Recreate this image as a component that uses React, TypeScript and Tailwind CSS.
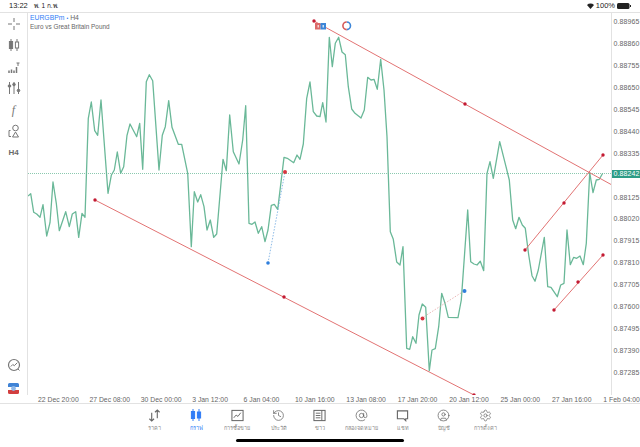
import { AtSign, CircleUser, History, Settings } from "lucide-react";
import type { ReactNode } from "react";

// price series in page coordinates, read off the screenshot
const PRICE =
  "28,196 30.7,193.7 33.7,212.3 36.7,214 40,217.3 43,204.7 46.7,236 50,222.7 53,182 56.3,203.3 59.3,230.7 65.7,211.7 69.3,226.7 72.3,214 75.7,211.7 78.7,237.3 82,213.3 85,217.3 88.3,118.3 91.3,102 94.7,130.7 97.7,135.3 101,100 104,140 108,193.3 111.3,175.3 114.3,170 117.3,152 120.7,173.3 123.7,166.7 127,135.3 130,124 136.7,136.7 139.7,123.3 142.7,169.3 146.3,81.7 149.3,74.7 152.7,80.7 159,170 162.3,135.3 165.3,126.7 168.7,100.7 172,127.3 178.3,144.3 181.7,144.3 187.7,173.3 191.3,246.7 194.3,191.7 197.7,202 200.7,194.7 204,206.7 207,230 210.3,220 213.7,237.3 216.7,234 223,159.3 226.3,170.7 229.7,115 233.3,151.7 239,164 242.7,140 245.7,105.7 249,223.3 252,224.3 255,222 258.3,233.3 261.7,226.7 265,241.7 268,230 271.3,205.3 274.3,204.3 277.7,209.3 284,157.3 287.3,158.3 293.7,162.7 297,155 300,159.3 303.3,144 306.7,98.3 310,82 313.3,111.7 316.7,116 320,116.7 322.7,102.7 326,122 329.3,37.3 332.3,66.7 335.3,43.3 338.7,37.3 342,52 345.3,54.7 348.3,86.7 351.7,109 355,113.3 361,118 364.3,110 367.7,77.3 371,80 374,79.3 377.3,89.3 380.7,59.3 384,90 387,136.7 390.3,231.7 393.3,239.3 396.7,262 400,265 403,246.7 406.7,348.3 409.7,349.3 412.7,336.7 416,343.3 419,315 422.3,304 425.7,307.3 429.3,370.7 432,350 435.3,348.7 438.7,326.7 441.7,293.3 445,303.3 448.3,317.3 458,317.7 461.3,300 467.7,210 470.7,261.7 474,264 477,265 480.3,261.3 483.7,270.7 487,173.3 490,161.7 493.3,178.3 499.7,141.7 506,166.7 509.3,180 512.7,220 515.7,228.7 519,217.3 522.3,225 525.3,228.3 528.7,255 532,275.7 535,281.3 538.3,270 544.3,237.3 547.7,286.7 551,287.3 557.3,296.7 560.7,285 564,283.3 567,230 570.3,264.7 573.7,257.3 576.7,258.3 580,256 583.3,264.7 586.3,243.3 589.7,172.7 593,192.7 596.3,180 599.3,179.3 602.7,173.3";

const DOTS = [
  [314, 21],
  [465, 104],
  [95, 200],
  [284, 297],
  [474, 395],
  [525, 250],
  [564, 203],
  [603, 155],
  [554, 310],
  [578, 282],
  [603, 255],
];

// the empty slot sits under the current price tag
const PRICE_LABELS = [
  "0.88965", "0.88860", "0.88755", "0.88650", "0.88545", "0.88440", "0.88335", "",
  "0.88125", "0.88020", "0.87915", "0.87810", "0.87705", "0.87600", "0.87495", "0.87390", "0.87285",
];

const TIME_LABELS = [
  "22 Dec 20:00", "27 Dec 08:00", "30 Dec 00:00", "3 Jan 12:00", "6 Jan 04:00", "10 Jan 16:00",
  "13 Jan 08:00", "17 Jan 20:00", "20 Jan 12:00", "25 Jan 00:00", "27 Jan 16:00", "1 Feb 04:00",
];

function Glyph({ children, size = 14 }: { children: ReactNode; size?: number }) {
  return (
    <svg width={size} height={size} viewBox="0 0 14 14" fill="none" stroke="currentColor" strokeWidth="1">
      {children}
    </svg>
  );
}

function Candles({ fill = false }: { fill?: boolean }) {
  return (
    <Glyph>
      <path d="M4 1v12M10 1v12" />
      <rect x="2.4" y="3.5" width="3.2" height="7" fill="currentColor" />
      <rect x="8.4" y="4" width="3.2" height="6" fill={fill ? "currentColor" : "#fff"} />
    </Glyph>
  );
}

function SideTools() {
  return (
    <div className="flex w-[27px] shrink-0 flex-col items-center justify-between pt-[3.500px] pb-[1.500px] text-[#777]">
      <div className="flex flex-col items-center gap-[7.500px]">
        <Glyph>
          <path d="M7 1v4M7 9v4M1 7h4M9 7h4" />
        </Glyph>
        <Candles />
        <Glyph>
          <path d="M2 13V10.500M4.500 13V9.500M7 13V10.500M9.500 13V7" strokeWidth="1.500" />
          <path d="M9.500 3h3M11 3V6" />
        </Glyph>
        <Glyph>
          <path d="M2.500 1v12M7 1v12M11.500 1v12" />
          <circle cx="2.500" cy="5" r="1.300" fill="currentColor" />
          <circle cx="7" cy="3.500" r="1.300" fill="currentColor" />
          <circle cx="11.500" cy="9.500" r="1.300" fill="currentColor" />
        </Glyph>
        <span className="flex h-[14px] items-center font-['Liberation_Serif',serif] text-[12px] leading-none italic">f</span>
        <Glyph>
          <circle cx="8.500" cy="4" r="2.800" />
          <path d="M5.500 13l3-5 3 5zM3.500 6.500H2v6h2" />
        </Glyph>
        <span className="flex h-[14px] items-center text-[8px] leading-none font-bold text-[#6a6a6a]">H4</span>
      </div>
      <div className="flex flex-col items-center gap-[11px]">
        <Glyph>
          <circle cx="7" cy="7" r="5.500" strokeWidth="1.200" />
          <path d="M3.800 8.500l2-2 1.500 1.200 3-3M11 11l1.500 1.500" />
        </Glyph>
        <svg width="11" height="11" viewBox="0 0 11 11">
          <path d="M0 1.500A1.500 1.500 0 0 1 1.500 0h8A1.500 1.500 0 0 1 11 1.500V4H0z" fill="#3f83d6" />
          <path d="M0 7h11v2.500A1.500 1.500 0 0 1 9.500 11h-8A1.500 1.500 0 0 1 0 9.500z" fill="#d23f3f" />
          <circle cx="5.500" cy="5.500" r="2.400" fill="#8fb8e8" />
        </svg>
      </div>
    </div>
  );
}

function Chart() {
  return (
    <div className="relative min-w-0 flex-1 border-x border-[#e2e2e2]">
      {/* viewBox uses page coordinates so points can be read straight off the screenshot */}
      <svg className="block h-full w-full" viewBox="28 13 583 382" preserveAspectRatio="none" fill="none">
        <path d="M28 173.500H611" stroke="#6dbb9b" strokeWidth="0.800" strokeDasharray="1 1" />
        <polyline points={PRICE} stroke="#6ab898" strokeWidth="1.300" strokeLinejoin="round" />
        <path d="M314 21L612 185M95 200L474 395M525 250L603 155M554 310L603 255" stroke="#e27373" strokeWidth="1" />
        <path d="M268 263L285 172" stroke="#6ea8e0" strokeWidth="0.800" strokeDasharray="1.500 1.500" />
        <path d="M422 318L464 291" stroke="#e5a3a3" strokeWidth="0.800" strokeDasharray="1.500 1.500" />
        {DOTS.map(([cx, cy]) => (
          <circle key={`${cx}-${cy}`} cx={cx} cy={cy} r="1.700" fill="#c31a32" />
        ))}
        <circle cx="285" cy="172" r="2" fill="#d9343f" />
        <circle cx="422.500" cy="318.500" r="2" fill="#d9343f" />
        <circle cx="268" cy="263" r="1.800" fill="#2f7fdc" />
        <circle cx="464.500" cy="291" r="2" fill="#2f7fdc" />
        <rect x="315" y="23" width="5.500" height="6.500" fill="#dc6a6a" />
        <rect x="320.500" y="23" width="5.500" height="6.500" fill="#3d86d8" />
        <rect x="317.500" y="25" width="1.500" height="2.500" fill="#f3d5d5" />
        <rect x="322.500" y="25" width="1.500" height="2.500" fill="#cfe0f2" />
        <path d="M346.700 22a3.800 3.800 0 0 1 0 7.600" stroke="#3d86d8" strokeWidth="1.600" />
        <path d="M346.700 22a3.800 3.800 0 0 0 0 7.600" stroke="#d65a5a" strokeWidth="1.600" />
      </svg>
      <div className="absolute top-[1px] left-[2px] leading-[8.500px] whitespace-nowrap">
        <div className="text-[6.800px]">
          <span className="text-[#2f7cf6]">EURGBPm</span>
          <span className="mx-[2px] text-[5px] text-[#2f7cf6]">•</span>
          <span className="text-[#666]">H4</span>
        </div>
        <div className="text-[6.400px] text-[#666]">Euro vs Great Britain Pound</div>
      </div>
    </div>
  );
}

function PriceAxis() {
  return (
    <div className="relative flex w-[28px] shrink-0 flex-col justify-between pt-[5.300px] pb-[18px] pl-[1.500px] text-[7px] leading-[8px] tracking-[0.1px] text-[#666]">
      {PRICE_LABELS.map((label, i) => (
        <span key={i} className="h-[8px]">
          {label}
        </span>
      ))}
      <span className="absolute top-[156.500px] left-0 h-[8.500px] w-[28px] bg-[#2e9c86] pl-[1.500px] leading-[8.500px] text-white">0.88242</span>
    </div>
  );
}

function TimeAxis() {
  return (
    <div className="flex h-[9px] overflow-hidden border-b border-[#e2e2e2] pl-[38px] text-[6.850px] leading-[9px] text-[#666]">
      {TIME_LABELS.map((label) => (
        <span key={label} className="w-[51.400px] shrink-0 whitespace-nowrap">
          {label}
        </span>
      ))}
    </div>
  );
}

const TABS: { label: string; icon: ReactNode; active?: boolean }[] = [
  {
    label: "ราคา",
    icon: (
      <Glyph size={13}>
        <path d="M4 4v9M1.500 10.500L4 13l2.500-2.500M10 10V1M7.500 3.500L10 1l2.500 2.500" strokeWidth="1.200" />
      </Glyph>
    ),
  },
  { label: "กราฟ", icon: <Candles fill />, active: true },
  {
    label: "การซื้อขาย",
    icon: (
      <Glyph size={13}>
        <rect x="1" y="1.500" width="12" height="11" strokeWidth="1.100" />
        <path d="M3 9.500l2.500-3 2 1.500 3-4" />
      </Glyph>
    ),
  },
  { label: "ประวัติ", icon: <History size={13} strokeWidth={1.400} /> },
  {
    label: "ข่าว",
    icon: (
      <Glyph size={13}>
        <rect x="1" y="1.500" width="12" height="11" strokeWidth="1.100" />
        <path d="M3 4.500h5M3 7h5M3 9.500h5M9.500 1.500v11" />
      </Glyph>
    ),
  },
  { label: "กล่องจดหมาย", icon: <AtSign size={13} strokeWidth={1.400} /> },
  {
    label: "แชท",
    icon: (
      <Glyph size={13}>
        <path d="M1.500 2h11v8.500h-2V12.500l-2-2h-7z" strokeWidth="1.200" />
      </Glyph>
    ),
  },
  { label: "บัญชี", icon: <CircleUser size={13} strokeWidth={1.400} /> },
  { label: "การตั้งค่า", icon: <Settings size={13} strokeWidth={1.300} /> },
];

function TabBar() {
  return (
    <div className="flex justify-center pt-[4px]">
      {TABS.map((tab) => (
        <div
          key={tab.label}
          className={`flex w-[41.300px] flex-col items-center gap-[2px] ${tab.active ? "text-[#2f7cf6]" : "text-[#666]"}`}
        >
          <span className="flex h-[14px] items-center">{tab.icon}</span>
          <span className={`text-[5.500px] leading-[9px] whitespace-nowrap ${tab.active ? "" : "text-[#8a8a8a]"}`}>{tab.label}</span>
        </div>
      ))}
    </div>
  );
}

export default function App() {
  return (
    <div className="flex h-[447px] w-[640px] flex-col overflow-hidden bg-white font-['Liberation_Sans','Noto_Sans',sans-serif]">
      <div className="flex h-[13px] shrink-0 items-center border-b border-[#e2e2e2] pr-[9px] pl-[9px] text-[7.500px] leading-none text-[#222]">
        <span className="font-medium">13:22</span>
        <span className="ml-[6px] text-[6.500px]">พ. 1 ก.พ.</span>
        <span className="ml-auto flex items-center gap-[2px]">
          <svg width="7" height="6" viewBox="0 0 7 6" fill="#222">
            <path d="M0 2a5 5 0 0 1 7 0L3.500 6z" />
          </svg>
          <span>100%</span>
          <svg width="14" height="6" viewBox="0 0 14 6" fill="#222">
            <rect width="12.500" height="6" rx="1.500" />
            <rect x="13" y="2" width="1" height="2" />
          </svg>
        </span>
      </div>
      <div className="flex h-[382px] shrink-0">
        <SideTools />
        <Chart />
        <PriceAxis />
      </div>
      <TimeAxis />
      <TabBar />
      <div className="mx-auto mt-auto mb-[5px] h-[3px] w-[168px] rounded-full bg-black" />
    </div>
  );
}
